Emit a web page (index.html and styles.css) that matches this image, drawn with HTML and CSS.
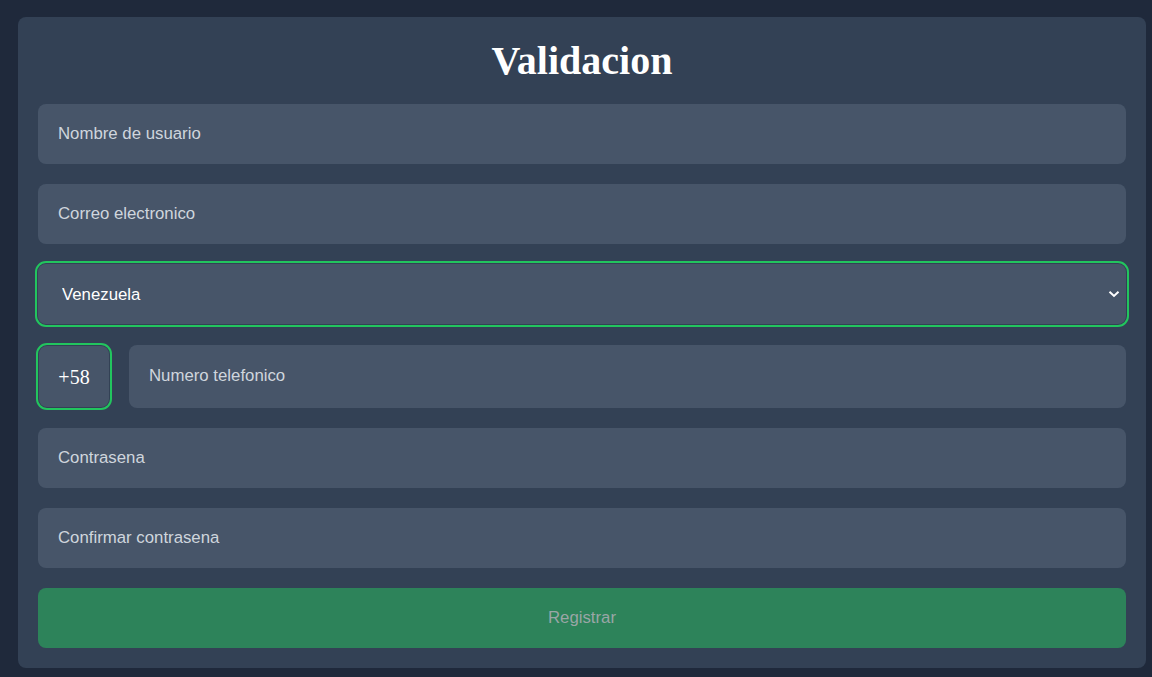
FILE: index.html
```html
<!DOCTYPE html>
<html lang="es">
<head>
<meta charset="utf-8">
<title>Validacion</title>
<link rel="stylesheet" href="styles.css">
</head>
<body>
<main class="card">
  <h1 class="title">Validacion</h1>
  <form class="form">
    <input class="field" type="text" placeholder="Nombre de usuario">
    <input class="field" type="email" placeholder="Correo electronico">
    <div class="select-wrap">
      <select class="field field-select">
        <option>Venezuela</option>
      </select>
      <svg class="chevron" width="12" height="8" viewBox="0 0 12 8" aria-hidden="true">
        <path d="M1.5 1.8 L6 6 L10.5 1.8" fill="none" stroke="#ffffff" stroke-width="2"/>
      </svg>
    </div>
    <div class="phone-row">
      <div class="prefix">+58</div>
      <input class="field field-phone" type="tel" placeholder="Numero telefonico">
    </div>
    <input class="field" type="password" placeholder="Contrasena">
    <input class="field" type="password" placeholder="Confirmar contrasena">
    <button class="submit" type="submit" disabled>Registrar</button>
  </form>
</main>
</body>
</html>
```

FILE: styles.css
```css
html, body {
  margin: 0;
  background: #1f293b;
}

body {
  padding: 17px 6px 0 18px;
  min-height: 677px;
  box-sizing: border-box;
  font-family: "Liberation Sans", Arial, sans-serif;
}

.card {
  background: #334155;
  border-radius: 8px;
  padding: 21px 20px 20px;
}

.title {
  margin: 0 0 20px;
  font-family: "Liberation Serif", "Times New Roman", serif;
  font-weight: bold;
  font-size: 40px;
  line-height: 46px;
  color: #ffffff;
  text-align: center;
}

.form {
  display: flex;
  flex-direction: column;
  gap: 20px;
}

.field {
  display: block;
  box-sizing: border-box;
  width: 100%;
  height: 60px;
  margin: 0;
  padding: 0 20px;
  border: none;
  border-radius: 8px;
  background: #475569;
  color: #ffffff;
  font-family: "Liberation Sans", Arial, sans-serif;
  font-size: 16.8px;
  outline: none;
}

.field::placeholder {
  color: #cfd5dd;
  opacity: 1;
}

.select-wrap {
  position: relative;
}

.field-select {
  appearance: none;
  -webkit-appearance: none;
  padding-left: 24px;
  outline: 2px solid #22c55e;
  outline-offset: 1px;
}

.chevron {
  position: absolute;
  right: 6px;
  top: 26px;
  pointer-events: none;
}

.phone-row {
  display: flex;
  align-items: center;
  gap: 20px;
  height: 64px;
}

.prefix {
  flex: 0 0 auto;
  box-sizing: border-box;
  width: 70px;
  height: 61px;
  margin-left: 1px;
  border-radius: 8px;
  background: #475569;
  outline: 2px solid #22c55e;
  outline-offset: 1px;
  display: flex;
  align-items: center;
  justify-content: center;
  padding-top: 2px;
  font-family: "Liberation Serif", "Times New Roman", serif;
  font-size: 20px;
  color: #ffffff;
}

.field-phone {
  flex: 1 1 auto;
  height: 63px;
}

.submit {
  display: block;
  width: 100%;
  height: 60px;
  border: none;
  border-radius: 8px;
  background: #2d835a;
  color: #9aa6a6;
  font-family: "Liberation Sans", Arial, sans-serif;
  font-size: 16.8px;
}
```
